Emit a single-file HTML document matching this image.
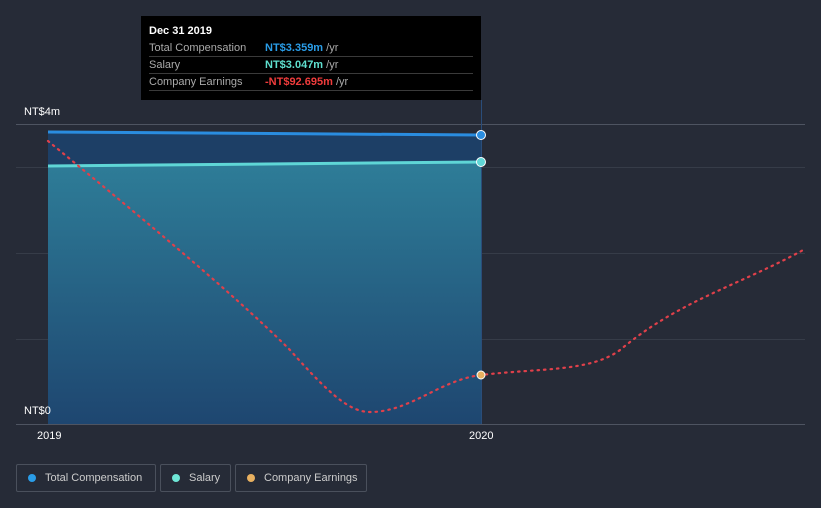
<!DOCTYPE html>
<html><head><style>
body{margin:0;width:821px;height:508px;background:#262b37;font-family:"Liberation Sans",sans-serif;overflow:hidden;position:relative}
.t{position:absolute;color:#fff;font-size:11px}
.tip{position:absolute;left:141px;top:16px;width:340px;height:84px;background:#000;}
.tip .r{position:absolute;left:8px;width:324px;border-bottom:1px solid #3a3a3a;font-size:11px;color:#aaa;height:16px;line-height:16px;white-space:nowrap}
.tip .v{position:absolute;left:116px;font-weight:bold}
.tip .y{color:#aaa;font-weight:normal}
.leg{position:absolute;top:464px;height:28px;border:1px solid #4a505c;border-radius:2px;color:#ccc;font-size:11px;line-height:26px;box-sizing:border-box;white-space:nowrap}
.leg i{position:absolute;left:11px;top:9px;width:8px;height:8px;border-radius:50%}
</style></head><body>
<svg width="821" height="508" style="position:absolute;left:0;top:0">
<defs><linearGradient id="g" x1="0" y1="0" x2="0" y2="1"><stop offset="0" stop-color="#2e7d98"/><stop offset="1" stop-color="#1e4670"/></linearGradient></defs>
<g stroke="#363c48" stroke-width="1">
<line x1="16" y1="124.5" x2="805" y2="124.5" stroke="#4e5461"/>
<line x1="16" y1="167.5" x2="805" y2="167.5"/>
<line x1="16" y1="253.5" x2="805" y2="253.5"/>
<line x1="16" y1="339.5" x2="805" y2="339.5"/>
<line x1="16" y1="424.5" x2="805" y2="424.5" stroke="#4e5461"/>
</g>
<polygon points="48,132 481,135 481,424 48,424" fill="#1d3f66"/>
<polygon points="48,166 481,162 481,424 48,424" fill="url(#g)"/>
<line x1="481.5" y1="100" x2="481.5" y2="424" stroke="#2a4d7a"/>
<line x1="48" y1="132" x2="481" y2="135" stroke="#2a8de0" stroke-width="3"/>
<line x1="48" y1="166" x2="481" y2="162" stroke="#5fd6d6" stroke-width="3"/>
<path d="M48,141 C120,200 230,290 290,350 C330,395 350,412 370,412 C410,412 440,380 481,375 C540,368 590,372 620,350 C680,300 740,285 805,249" fill="none" stroke="#e0404a" stroke-width="2.2" stroke-dasharray="1.5,5" stroke-linecap="round"/>
<circle cx="481" cy="135" r="4.5" fill="#2a8de0" stroke="#fff" stroke-width="1"/>
<circle cx="481" cy="162" r="4.5" fill="#5fd6d6" stroke="#fff" stroke-width="1"/>
<circle cx="481" cy="375" r="4" fill="#e8b060" stroke="#fff" stroke-width="1"/>
</svg>
<div class="t" style="left:24px;top:106px">NT$4m</div>
<div class="t" style="left:24px;top:405px">NT$0</div>
<div class="t" style="left:37px;top:430px">2019</div>
<div class="t" style="left:469px;top:430px">2020</div>
<div class="tip">
<div style="position:absolute;left:8px;top:9px;color:#fff;font-weight:bold;font-size:11px">Dec 31 2019</div>
<div class="r" style="top:24px">Total Compensation<span class="v" style="color:#2a9de8">NT$3.359m <span class="y">/yr</span></span></div>
<div class="r" style="top:41px">Salary<span class="v" style="color:#5fe0d0">NT$3.047m <span class="y">/yr</span></span></div>
<div class="r" style="top:58px">Company Earnings<span class="v" style="color:#f03c3c">-NT$92.695m <span class="y">/yr</span></span></div>
</div>
<div class="leg" style="left:16px;width:140px"><i style="background:#2a9de8"></i><span style="position:absolute;left:28px">Total Compensation</span></div>
<div class="leg" style="left:160px;width:71px"><i style="background:#6ee6d6"></i><span style="position:absolute;left:28px">Salary</span></div>
<div class="leg" style="left:235px;width:132px"><i style="background:#e8b060"></i><span style="position:absolute;left:28px">Company Earnings</span></div>
</body></html>
